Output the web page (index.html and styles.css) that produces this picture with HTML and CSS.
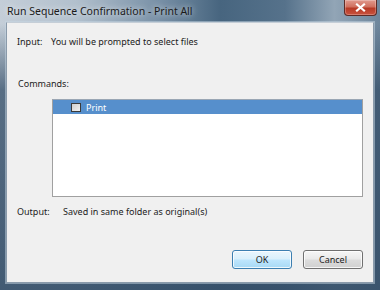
FILE: index.html
```html
<!DOCTYPE html>
<html lang="en">
<head>
    <meta charset="UTF-8" />
    <title>Run Sequence Confirmation - Print All</title>
    <link rel="stylesheet" href="styles.css">
</head>
<body>

<div class="window">
    <div class="title-bar">
        <span class="title">Run Sequence Confirmation - Print All</span>
        <span class="close-btn">
            <svg width="11" height="9" viewBox="0 0 11 9">
                <path d="M2 1.5 L9 7.5 M9 1.5 L2 7.5" stroke="#fff" stroke-width="2.2" stroke-linecap="square"/>
            </svg>
        </span>
    </div>

    <div class="client">
        <div class="info-row">
            <span class="key key-input">Input:</span>
            <span>You will be prompted to select files</span>
        </div>

        <div class="section-label">Commands:</div>

        <div class="command-list">
            <div class="command selected">
                <span class="check"></span>
                <span>Print</span>
            </div>
        </div>

        <div class="info-row">
            <span class="key key-output">Output:</span>
            <span>Saved in same folder as original(s)</span>
        </div>

        <div class="buttons">
            <button class="btn btn-default">OK</button>
            <button class="btn">Cancel</button>
        </div>
    </div>
</div>

</body>
</html>
```

FILE: styles.css
```css
* {
    box-sizing: border-box;
    margin: 0;
    padding: 0;
}

body {
    font-family: 'Noto Sans', 'Open Sans', sans-serif;
    font-size: 9px;
    color: #1c1c1c;
    background: #3b5671;
}

.window {
    width: 380px;
    height: 290px;
    display: flex;
    flex-direction: column;
    background:
        linear-gradient(to bottom, rgba(52, 78, 104, 0) 0px, rgba(52, 78, 104, 0) 24px, rgba(52, 78, 104, 0.75) 90px, rgba(52, 78, 104, 0.9) 100%),
        linear-gradient(to right, #c4ced8 0%, #b2c0cd 20%, #7890a6 42%, #47657f 58%, #56728b 75%, #92a5b6 88%, #6e869c 100%);
    padding: 0 6px 7px 6px;
}

.title-bar {
    height: 22px;
    display: flex;
    align-items: flex-start;
    justify-content: space-between;
    position: relative;
}

.title {
    font-size: 10.5px;
    color: #1a1a1a;
    margin-top: 4px;
    margin-left: 1px;
    text-shadow: 0 0 6px rgba(255, 255, 255, 0.9);
}

.close-btn {
    position: absolute;
    top: 0;
    right: -3px;
    width: 33px;
    height: 16px;
    display: flex;
    align-items: center;
    justify-content: center;
    border: 1px solid #5e2b26;
    border-top: none;
    border-radius: 0 0 4px 4px;
    background: linear-gradient(to bottom, #e19a8e 0%, #d0705f 45%, #b73a26 55%, #c9533f 100%);
    box-shadow: inset 0 0 0 1px rgba(255, 255, 255, 0.25);
}

.client {
    flex: 1;
    background: #f0f0f0;
    border: 1px solid #8a9aaa;
    border-top-color: #c5ced7;
    box-shadow: 0 0 0 1px rgba(200, 215, 228, 0.5);
    display: flex;
    flex-direction: column;
    padding: 12px 0 0 10px;
}

.info-row {
    display: flex;
    height: 14px;
    line-height: 14px;
}

.key {
    flex-shrink: 0;
}

.key-input {
    width: 34px;
}

.key-output {
    width: 46px;
}

.section-label {
    height: 14px;
    line-height: 14px;
    margin-top: 28px;
    margin-left: 1px;
}

.command-list {
    width: 311px;
    height: 98px;
    margin: 8px 0 8px 35px;
    background: white;
    border: 1px solid #a0a0a0;
    border-top-color: #9aa6b4;
}

.command {
    height: 14px;
    display: flex;
    align-items: center;
    padding-left: 18px;
}

.command.selected {
    background: #568fcc;
    color: white;
}

.check {
    width: 10px;
    height: 9px;
    margin-right: 5px;
    border: 1px solid #3a3a3a;
    background: linear-gradient(to bottom right, #cfcfcf, #f0f0f0);
}

.buttons {
    display: flex;
    justify-content: flex-end;
    gap: 11px;
    margin-top: 31px;
    padding-right: 10px;
}

.btn {
    width: 60px;
    height: 19px;
    font-family: inherit;
    font-size: 9px;
    color: #1c1c1c;
    border: 1px solid #707070;
    border-radius: 3px;
    background: linear-gradient(to bottom, #f6f6f6 0%, #e9e9e9 48%, #dcdcdc 52%, #d0d0d0 100%);
    box-shadow: inset 0 0 0 1px rgba(255, 255, 255, 0.8);
}

.btn-default {
    border-color: #3c7fb1;
    background: linear-gradient(to bottom, #eaf6fd 0%, #d9f0fc 48%, #bee6fd 52%, #a7d9f5 100%);
}
```
